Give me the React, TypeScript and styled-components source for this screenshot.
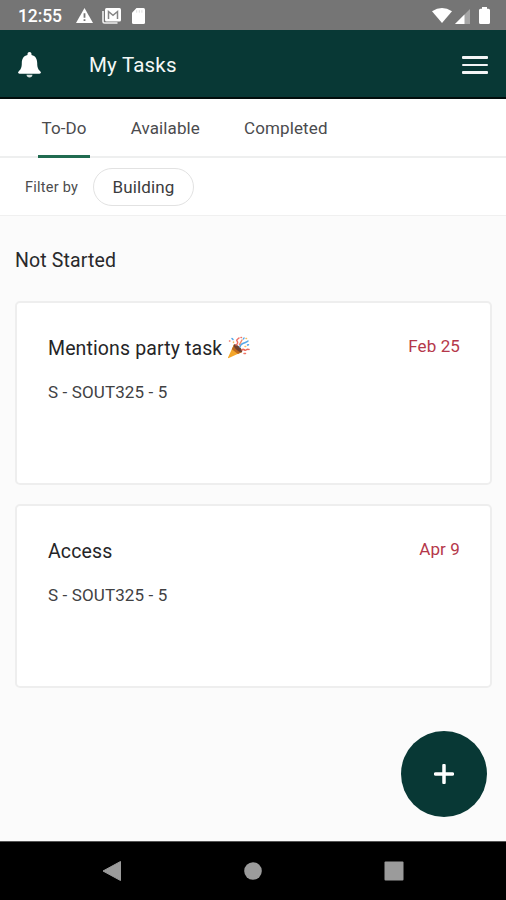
import React from "react";
import styled, { createGlobalStyle } from "styled-components";

const GlobalStyle = createGlobalStyle`
  * { box-sizing: border-box; }
  body { margin: 0; font-family: Roboto, "Liberation Sans", sans-serif; background: #fafafa; }
  svg { display: block; flex: none; }
`;

const Screen = styled.div`
  position: relative;
  display: flex;
  flex-direction: column;
  width: 506px;
  height: 900px;
  overflow: hidden;
  background: #fbfbfb;
`;

const StatusBar = styled.div`
  display: flex;
  align-items: center;
  justify-content: space-between;
  flex: none;
  height: 30px;
  padding: 1px 16px 0 18px;
  background: #757575;
  color: #fff;
`;

const StatusGroup = styled.div<{ $gap: number }>`
  display: flex;
  align-items: center;
  gap: ${(p) => p.$gap}px;
`;

const Clock = styled.span`
  width: 46px;
  margin-right: 2px;
  font-size: 17.5px;
  font-weight: 500;
  line-height: 20px;
  letter-spacing: -0.1px;
  white-space: nowrap;
`;

const Header = styled.header`
  display: flex;
  align-items: center;
  flex: none;
  height: 69px;
  padding: 3px 18px 0;
  background: #083835;
  border-bottom: 2px solid #020d0c;
  color: #f4f8f7;
`;

const Title = styled.h1`
  flex: 1;
  margin: 0 0 0 48px;
  font-size: 20.5px;
  font-weight: 400;
  line-height: 26px;
  letter-spacing: 0.2px;
`;

const MenuIcon = styled.div`
  display: flex;
  flex-direction: column;
  gap: 5px;
  width: 26px;

  i {
    height: 2.6px;
    border-radius: 1px;
    background: #f3f5f6;
  }
`;

const Tabs = styled.nav`
  display: flex;
  flex: none;
  height: 59px;
  padding-left: 38px;
  gap: 37px;
  background: #fff;
  border-bottom: 2px solid #eeefef;
`;

const Tab = styled.div<{ $active?: boolean }>`
  height: 59px;
  padding: 18px 3.5px 0;
  border-bottom: 3px solid ${(p) => (p.$active ? "#206b50" : "transparent")};
  color: #4b4b4e;
  font-size: 17px;
  line-height: 22px;
  letter-spacing: 0.12px;
`;

const FilterBar = styled.div`
  display: flex;
  align-items: center;
  flex: none;
  height: 58px;
  padding: 0 0 0 25px;
  gap: 14px;
  background: #fff;
  border-bottom: 1px solid #f0f0f0;
`;

const FilterLabel = styled.span`
  width: 54px;
  padding-top: 2px;
  color: #4c4c4e;
  font-size: 14.5px;
  letter-spacing: 0.25px;
  white-space: nowrap;
`;

const Chip = styled.div`
  display: flex;
  align-items: center;
  justify-content: center;
  width: 101px;
  height: 38px;
  padding-top: 1px;
  border: 1px solid #e2e2e2;
  border-radius: 19px;
  color: #3b3b3d;
  font-size: 17px;
  letter-spacing: 0.15px;
`;

const Content = styled.main`
  flex: 1;
  padding: 32px 14px 0 15px;
`;

const SectionTitle = styled.h2`
  margin: 0 0 27px;
  color: #29292b;
  font-size: 19.5px;
  font-weight: 400;
  line-height: 26px;
  letter-spacing: 0.13px;
`;

const CardList = styled.div`
  display: flex;
  flex-direction: column;
  gap: 19px;
`;

const Card = styled.article`
  height: 184px;
  padding: 32px 30px 0 31px;
  background: #fff;
  border: 2px solid #eeeeee;
  border-radius: 5px;
`;

const CardTop = styled.div`
  display: flex;
  justify-content: space-between;
`;

const TaskTitle = styled.h3`
  display: flex;
  gap: 5px;
  margin: 1px 0 0;
  color: #252527;
  font-size: 19.5px;
  font-weight: 400;
  line-height: 26px;
  letter-spacing: 0.12px;
`;

const Due = styled.span`
  color: #b5384a;
  font-size: 17px;
  line-height: 22px;
  letter-spacing: 0.12px;
`;

const Location = styled.p`
  margin: 19px 0 0;
  color: #414143;
  font-size: 17px;
  line-height: 22px;
  letter-spacing: 0.12px;
`;

const AddButton = styled.button`
  position: absolute;
  right: 19px;
  bottom: 83px;
  display: flex;
  align-items: center;
  justify-content: center;
  width: 86px;
  height: 86px;
  padding: 0;
  border: 0;
  border-radius: 50%;
  background: #083835;
`;

const SystemNav = styled.footer`
  display: flex;
  align-items: center;
  justify-content: space-between;
  flex: none;
  height: 59px;
  padding: 0 102px;
  border-top: 1px solid #555;
  background: #000;
`;

const PartyIcon = () => (
  <svg width="23" height="23" viewBox="0 0 23 23">
    <path d="M7 8.5 1 21.4c-.2.6.2.9.8.7L15 16z" fill="#f4a62a" />
    <path d="M7 8.5 4.8 13.3 11 18l4-2z" fill="#bd681e" />
    <ellipse cx="11" cy="12.3" rx="5.5" ry="2.1" transform="rotate(43 11 12.3)" fill="#704332" />
    <g fill="none" strokeWidth="1.5" strokeLinecap="round">
      <path d="M9 9c2-1 2-3 1-4s1-2 2-3" stroke="#ef6e63" />
      <path d="M13 11c0-3 2-3 4-4s3-1 4-2" stroke="#58a9e8" />
      <path d="M15 14c1.6-2 2.5 1 4 0s1.500-.7 3-.5" stroke="#ed6659" />
      <path d="M12.500 8.500 15 4" stroke="#f48a68" />
      <path d="M5 2.500 6 3.500M17 2l-.5.9M20.500 9l1-.3" stroke="#55a6e8" />
      <path d="M2.500 5h.4M14 1.400h.5M17 17.500h1.500" stroke="#ef7566" />
      <path d="M6.500 6v.4M19 2.500h.5M18 10.500h.7" stroke="#f8be62" />
    </g>
  </svg>
);

const tasks = [
  { title: "Mentions party task", party: true, due: "Feb 25", location: "S - SOUT325 - 5" },
  { title: "Access", party: false, due: "Apr 9", location: "S - SOUT325 - 5" },
];

export default function App() {
  return (
    <>
      <GlobalStyle />
      <Screen>
        <StatusBar>
          <StatusGroup $gap={9.5}>
            <Clock>12:55</Clock>
            <svg width="17" height="15" viewBox="0 0 17 15">
              <path d="M8.500 0 17 15H0z" fill="#fff" />
              <path d="M7.600 5.200h1.800v4.600H7.600zM7.600 11.200h1.800v1.700H7.600z" fill="#757575" />
            </svg>
            <svg width="19" height="16" viewBox="0 0 19 16">
              <path d="M1 3v10.500q0 1.500 1.500 1.500H15.500" fill="none" stroke="#f2f2f2" strokeWidth="1.600" />
              <rect x="3" y="0" width="16" height="13.500" rx="1.500" fill="#fff" />
              <path d="M6.500 11V3.500l4.500 3.800 4.500-3.800V11" fill="none" stroke="#858585" strokeWidth="1.500" />
            </svg>
            <svg width="14" height="16" viewBox="-1 0 14 16">
              <path d="M4.500 0H11.500Q13 0 13 1.500v13Q13 16 11.500 16h-10Q0 16 0 14.500V4.800z" fill="#fff" />
              <path d="M4.700 2.200v2.500M7.300 2.200v2.500M9.900 2.200v2.500" stroke="#ddd" strokeWidth="1" />
            </svg>
          </StatusGroup>
          <StatusGroup $gap={3}>
            <svg width="20" height="15" viewBox="0 0 20 15">
              <path d="M0 3.200Q10-3.200 20 3.200L10 15z" fill="#fff" />
            </svg>
            <svg width="15" height="16" viewBox="0 0 15 16">
              <path d="M0 16 15 1v15z" fill="#a5a5a5" />
              <path d="M0 16 9.500 6.500V16z" fill="#fff" />
            </svg>
            <svg width="17" height="17" viewBox="0 0 17 17">
              <path d="M9 0h5v1.700h1.500Q17 1.700 17 3.200v12.300q0 1.500-1.500 1.500h-8Q6 17 6 15.500V3.200q0-1.500 1.500-1.500H9z" fill="#fff" />
            </svg>
          </StatusGroup>
        </StatusBar>
        <Header>
          <svg width="23" height="26" viewBox="0 0 23 26">
            <path d="M11.500 0c1.200 0 2 .8 2 2v1c4 .9 5.700 4 5.700 8 0 5 1.200 6.500 3 8.200 1.300 1.300.7 2.600-.8 2.600H1.600c-1.500 0-2.100-1.300-.8-2.600 1.800-1.700 3-3.200 3-8.200 0-4 1.700-7.100 5.700-8V2c0-1.200.8-2 2-2z" fill="#fff" />
            <path d="M8.500 22.800h6q-.4 2.700-3 2.700t-3-2.700z" fill="#d5dfdd" />
          </svg>
          <Title>My Tasks</Title>
          <MenuIcon><i /><i /><i /></MenuIcon>
        </Header>
        <Tabs>
          <Tab $active>To-Do</Tab>
          <Tab>Available</Tab>
          <Tab>Completed</Tab>
        </Tabs>
        <FilterBar>
          <FilterLabel>Filter by</FilterLabel>
          <Chip>Building</Chip>
        </FilterBar>
        <Content>
          <SectionTitle>Not Started</SectionTitle>
          <CardList>
            {tasks.map((task) => (
              <Card key={task.title}>
                <CardTop>
                  <TaskTitle>
                    {task.title}
                    {task.party && <PartyIcon />}
                  </TaskTitle>
                  <Due>{task.due}</Due>
                </CardTop>
                <Location>{task.location}</Location>
              </Card>
            ))}
          </CardList>
        </Content>
        <AddButton aria-label="Add task">
          <svg width="20" height="20" viewBox="0 0 20 20">
            <path d="M10 1.500v17M1.500 10h17" stroke="#fff" strokeWidth="3.500" strokeLinecap="round" />
          </svg>
        </AddButton>
        <SystemNav>
          <svg width="20" height="20" viewBox="0 0 20 20">
            <path d="M1 10 18.500.5v19z" fill="#9b9b9b" stroke="#9b9b9b" strokeLinejoin="round" />
          </svg>
          <svg width="18" height="18" viewBox="0 0 18 18">
            <circle cx="9" cy="9" r="8.800" fill="#9b9b9b" />
          </svg>
          <svg width="20" height="20" viewBox="0 0 20 20">
            <rect x=".5" y=".5" width="19" height="19" rx="1" fill="#9b9b9b" />
          </svg>
        </SystemNav>
      </Screen>
    </>
  );
}
